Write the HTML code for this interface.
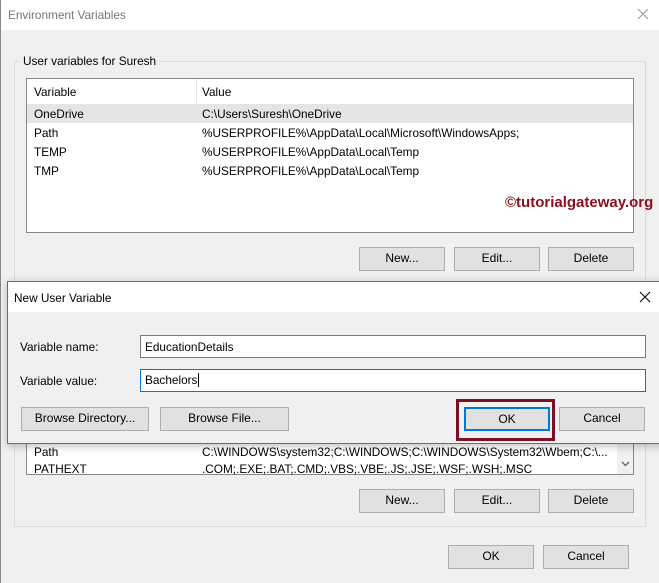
<!DOCTYPE html>
<html><head><style>
*{box-sizing:border-box;margin:0;padding:0}
body{width:659px;height:583px;background:#f0f0f0;font-family:"Liberation Sans",sans-serif;font-size:11.8px;color:#000;position:relative;overflow:hidden}
.a{position:absolute}
.btn{position:absolute;background:#e1e1e1;border:1px solid #adadad;text-align:center;line-height:21px;font-size:12px}
.lb{position:absolute;background:#fff;border:1px solid #828790}
.t{position:absolute;white-space:nowrap}
</style></head><body>
<div class="a" style="left:0;top:0;width:659px;height:30px;background:#fff"></div>
<div class="a" style="left:0;top:0;width:1px;height:583px;background:#888"></div>
<div class="t" style="left:8px;top:8px;color:#777">Environment Variables</div>
<svg class="a" style="left:637px;top:8px" width="12" height="12"><path d="M1 1L11 11M11 1L1 11" stroke="#999" stroke-width="1"/></svg>
<div class="a" style="left:14px;top:61px;width:632px;height:466px;border:1px solid #dcdcdc"></div>
<div class="t" style="left:20px;top:54px;background:#f0f0f0;padding:0 3px">User variables for Suresh</div>
<div class="lb" style="left:26px;top:78px;width:608px;height:155px">
<div class="a" style="left:0;top:0;width:606px;height:24px;background:#fff"></div>
<div class="a" style="left:169px;top:0;width:1px;height:24px;background:#e5e5e5"></div>
<div class="t" style="left:7px;top:6px">Variable</div><div class="t" style="left:175px;top:6px">Value</div>
<div class="a" style="left:0;top:25px;width:606px;height:19px;background:#e5e5e5"></div>
<div class="t" style="left:7px;top:28px">OneDrive</div><div class="t" style="left:175px;top:28px">C:\Users\Suresh\OneDrive</div>
<div class="t" style="left:7px;top:47px">Path</div><div class="t" style="left:175px;top:47px">%USERPROFILE%\AppData\Local\Microsoft\WindowsApps;</div>
<div class="t" style="left:7px;top:66px">TEMP</div><div class="t" style="left:175px;top:66px">%USERPROFILE%\AppData\Local\Temp</div>
<div class="t" style="left:7px;top:85px">TMP</div><div class="t" style="left:175px;top:85px">%USERPROFILE%\AppData\Local\Temp</div>
</div>
<div class="t" style="left:505px;top:194px;color:#8b0f1a;font-weight:bold;font-size:15px">©tutorialgateway.org</div>
<div class="btn" style="left:359px;top:247px;width:86px;height:24px">New...</div>
<div class="btn" style="left:454px;top:247px;width:86px;height:24px">Edit...</div>
<div class="btn" style="left:548px;top:247px;width:86px;height:24px">Delete</div>

<div class="lb" style="left:26px;top:420px;width:608px;height:55px">
<div class="t" style="left:7px;top:24px">Path</div><div class="t" style="left:175px;top:24px">C:\WINDOWS\system32;C:\WINDOWS;C:\WINDOWS\System32\Wbem;C:\...</div>
<div class="t" style="left:7px;top:41px">PATHEXT</div><div class="t" style="left:175px;top:41px">.COM;.EXE;.BAT;.CMD;.VBS;.VBE;.JS;.JSE;.WSF;.WSH;.MSC</div>
<div class="a" style="left:590px;top:0;width:16px;height:53px;background:#f0f0f0"></div>
<svg class="a" style="left:594px;top:40px" width="9" height="6"><path d="M1 1L4.5 4.5L8 1" stroke="#606060" fill="none" stroke-width="1.3"/></svg>
</div>
<div class="btn" style="left:359px;top:489px;width:86px;height:24px">New...</div>
<div class="btn" style="left:454px;top:489px;width:86px;height:24px">Edit...</div>
<div class="btn" style="left:548px;top:489px;width:86px;height:24px">Delete</div>
<div class="btn" style="left:448px;top:545px;width:86px;height:24px">OK</div>
<div class="btn" style="left:543px;top:545px;width:86px;height:24px">Cancel</div>

<div class="a" style="left:7px;top:281px;width:660px;height:163px;background:#f0f0f0;border:1px solid #1883d7;box-shadow:0 2px 8px rgba(0,0,0,.25)">
<div class="a" style="left:0;top:0;width:660px;height:30px;background:#fff"></div>
<div class="t" style="left:6px;top:9px">New User Variable</div>
<svg class="a" style="left:631px;top:9px" width="12" height="12"><path d="M1 1L11 11M11 1L1 11" stroke="#000" stroke-width="1"/></svg>
<div class="t" style="left:12px;top:58px">Variable name:</div>
<div class="a" style="left:132px;top:53px;width:506px;height:23px;background:#fff;border:1px solid #7a7a7a"></div>
<div class="t" style="left:137px;top:58px">EducationDetails</div>
<div class="t" style="left:12px;top:92px">Variable value:</div>
<div class="a" style="left:132px;top:87px;width:506px;height:23px;background:#fff;border:1px solid #0078d7"></div>
<div class="t" style="left:137px;top:91px">Bachelors<span style="border-left:1px solid #000;margin-left:1px"></span></div>
<div class="btn" style="left:13px;top:125px;width:128px;height:24px">Browse Directory...</div>
<div class="btn" style="left:152px;top:125px;width:129px;height:24px">Browse File...</div>
<div class="a" style="left:448px;top:117px;width:99px;height:42px;border:3px solid #7d1020"></div>
<div class="btn" style="left:456px;top:125px;width:86px;height:24px;border:2px solid #0078d7;line-height:20px">OK</div>
<div class="btn" style="left:551px;top:125px;width:86px;height:24px">Cancel</div>
</div>
</body></html>
